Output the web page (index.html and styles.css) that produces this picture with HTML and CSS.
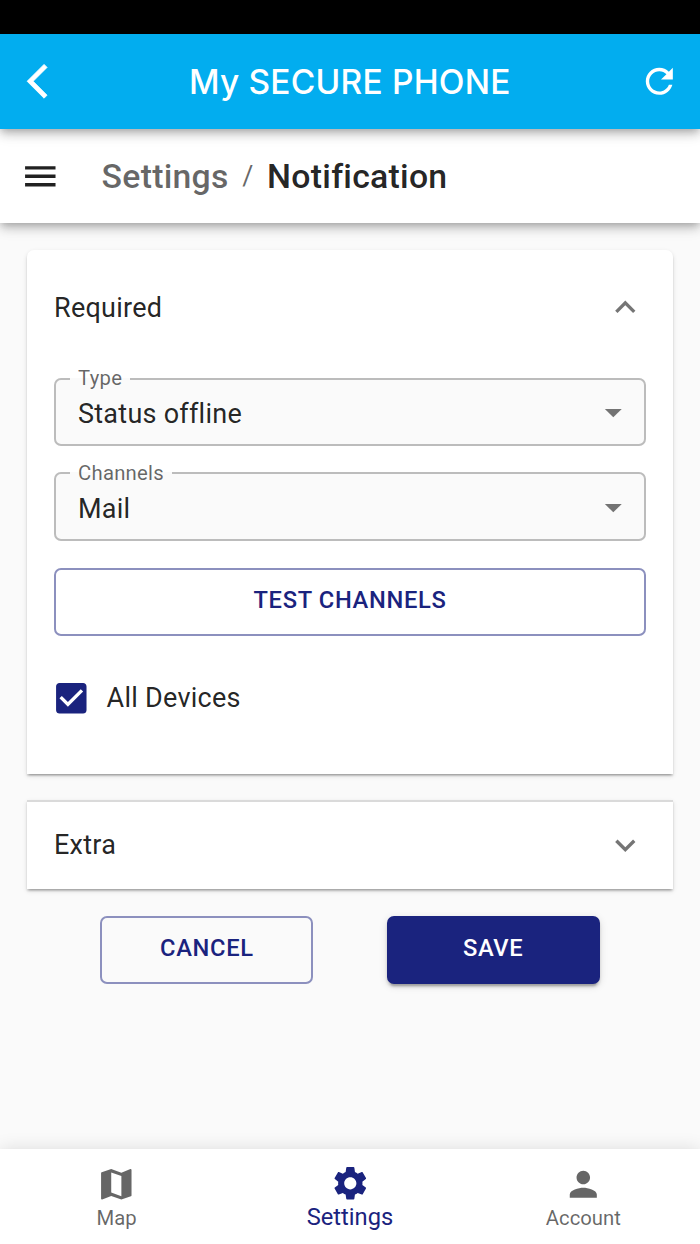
FILE: index.html
```
<!DOCTYPE html>
<html lang="en">
<head>
    <meta charset="UTF-8">
    <meta name="viewport" content="width=device-width, initial-scale=1.0">
    <title>Notification</title>
    <link rel="stylesheet" href="styles.css">
</head>
<body>
    <div class="status-bar"></div>
    <header class="app-bar">
        <svg class="icon back" viewBox="0 0 24 24"><path d="M17.77 3.77 16 2 6 12l10 10 1.77-1.77L9.54 12z"/></svg>
        <h1>My SECURE PHONE</h1>
        <svg class="icon" viewBox="0 0 24 24"><path d="M17.65 6.35C16.2 4.9 14.21 4 12 4c-4.42 0-7.99 3.58-7.99 8s3.57 8 7.99 8c3.73 0 6.84-2.55 7.73-6h-2.08c-.82 2.33-3.04 4-5.65 4-3.31 0-6-2.69-6-6s2.69-6 6-6c1.66 0 3.14.69 4.22 1.78L13 11h7V4l-2.35 2.35z"/></svg>
    </header>
    <div class="toolbar">
        <svg class="icon" viewBox="0 0 24 24"><path d="M3 18h18v-2H3v2zm0-5h18v-2H3v2zm0-7v2h18V6H3z"/></svg>
        <nav class="breadcrumbs">
            <span class="parent">Settings</span>
            <span class="separator">/</span>
            <span class="current">Notification</span>
        </nav>
    </div>

    <main class="container">
        <section class="card required">
            <div class="card-header">
                <span>Required</span>
                <svg class="icon" viewBox="0 0 24 24"><path d="M12 8l-6 6 1.41 1.41L12 10.83l4.59 4.58L18 14z"/></svg>
            </div>
            <div class="card-body">
                <fieldset class="select">
                    <legend>Type</legend>
                    <span>Status offline</span>
                    <svg class="icon" viewBox="0 0 24 24"><path d="M7 10l5 5 5-5z"/></svg>
                </fieldset>
                <fieldset class="select">
                    <legend>Channels</legend>
                    <span>Mail</span>
                    <svg class="icon" viewBox="0 0 24 24"><path d="M7 10l5 5 5-5z"/></svg>
                </fieldset>
                <button class="btn outlined">Test channels</button>
                <div class="checkbox">
                    <svg class="icon" viewBox="0 0 24 24"><path d="M19 3H5c-1.11 0-2 .9-2 2v14c0 1.1.89 2 2 2h14c1.11 0 2-.9 2-2V5c0-1.1-.89-2-2-2zm-9 14l-5-5 1.41-1.41L10 14.17l7.59-7.59L19 8l-9 9z"/></svg>
                    <span>All Devices</span>
                </div>
            </div>
        </section>

        <section class="card extra">
            <div class="card-header">
                <span>Extra</span>
                <svg class="icon" viewBox="0 0 24 24"><path d="M16.59 8.59L12 13.17 7.41 8.59 6 10l6 6 6-6z"/></svg>
            </div>
        </section>

        <div class="actions">
            <button class="btn outlined">Cancel</button>
            <button class="btn contained">Save</button>
        </div>
    </main>

    <nav class="bottom-nav">
        <div class="nav-item">
            <svg class="icon" viewBox="0 0 24 24"><path d="M20.5 3l-.16.03L15 5.1 9 3 3.36 4.9c-.21.07-.36.25-.36.48V20.5c0 .28.22.5.5.5l.16-.03L9 18.9l6 2.1 5.64-1.9c.21-.07.36-.25.36-.48V3.5c0-.28-.22-.5-.5-.5zM15 19l-6-2.11V5l6 2.11V19z"/></svg>
            <span>Map</span>
        </div>
        <div class="nav-item selected">
            <svg class="icon" viewBox="0 0 24 24"><path d="M19.14 12.94c.04-.3.06-.61.06-.94 0-.32-.02-.64-.07-.94l2.03-1.58c.18-.14.23-.41.12-.61l-1.92-3.32c-.12-.22-.37-.29-.59-.22l-2.39.96c-.5-.38-1.03-.7-1.62-.94l-.36-2.54c-.04-.24-.24-.41-.48-.41h-3.84c-.24 0-.43.17-.47.41l-.36 2.54c-.59.24-1.13.57-1.62.94l-2.39-.96c-.22-.08-.47 0-.59.22L2.74 8.87c-.12.21-.08.47.12.61l2.03 1.58c-.05.3-.09.63-.09.94s.02.64.07.94l-2.03 1.58c-.18.14-.23.41-.12.61l1.92 3.32c.12.22.37.29.59.22l2.39-.96c.5.38 1.03.7 1.62.94l.36 2.54c.05.24.24.41.48.41h3.84c.24 0 .44-.17.47-.41l.36-2.54c.59-.24 1.13-.56 1.62-.94l2.39.96c.22.08.47 0 .59-.22l1.92-3.32c.12-.22.07-.47-.12-.61l-2.01-1.58zM12 15.6c-1.98 0-3.6-1.62-3.6-3.6s1.62-3.6 3.6-3.6 3.6 1.62 3.6 3.6-1.62 3.6-3.6 3.6z"/></svg>
            <span>Settings</span>
        </div>
        <div class="nav-item">
            <svg class="icon" viewBox="0 0 24 24"><path d="M12 12c2.21 0 4-1.79 4-4s-1.79-4-4-4-4 1.79-4 4 1.79 4 4 4zm0 2c-2.67 0-8 1.34-8 4v2h16v-2c0-2.66-5.33-4-8-4z"/></svg>
            <span>Account</span>
        </div>
    </nav>
</body>
</html>
```
FILE: styles.css
```
* {
    box-sizing: border-box;
}

body {
    margin: 0;
    height: 1244px;
    display: flex;
    flex-direction: column;
    overflow: hidden;
    font-family: Roboto, "Liberation Sans", sans-serif;
    font-size: 27px;
    letter-spacing: 0.00938em;
    color: rgba(0, 0, 0, 0.87);
    background-color: #fafafa;
}

.icon {
    width: 40.6px;
    height: 40.6px;
    flex-shrink: 0;
    fill: currentColor;
}

.status-bar {
    height: 34px;
    background-color: #000;
}

.app-bar,
.toolbar {
    display: flex;
    align-items: center;
    box-shadow: 0 3px 7px -2px rgba(0, 0, 0, 0.2), 0 6px 9px rgba(0, 0, 0, 0.14), 0 2px 17px rgba(0, 0, 0, 0.12);
}

.app-bar {
    position: relative;
    z-index: 2;
    height: 94.5px;
    padding: 0 20.5px 0 17px;
    justify-content: space-between;
    color: #fff;
    background-color: #02adef;
}

.back {
    stroke: currentColor;
    stroke-width: 0.5;
    stroke-linejoin: round;
}

h1 {
    margin: 0 0 0 3px;
    padding-top: 1px;
    font-family: Inter, sans-serif;
    font-size: 33.5px;
    font-weight: 450;
    letter-spacing: 0.006em;
}

.toolbar {
    position: relative;
    z-index: 1;
    height: 94.5px;
    padding: 1px 20px 0;
    gap: 41px;
    background-color: #fff;
}

.breadcrumbs {
    display: flex;
    align-items: center;
    font-size: 33.8px;
    font-weight: 500;
    letter-spacing: 0.0075em;
}

.parent {
    color: rgba(0, 0, 0, 0.6);
}

.separator {
    margin: 0 13.5px;
    font-size: 27px;
    font-weight: 400;
    color: rgba(0, 0, 0, 0.6);
}

.container {
    flex: 1;
    padding: 27px;
}

.card {
    background-color: #fff;
    box-shadow: 0 3px 2px -2px rgba(0, 0, 0, 0.2), 0 2px 2px rgba(0, 0, 0, 0.14), 0 2px 5px rgba(0, 0, 0, 0.12);
}

.required {
    height: 524px;
    border-radius: 7px 7px 0 0;
}

.extra {
    margin-top: 26px;
    border-top: 2px solid #dadada;
}

.card-header {
    display: flex;
    align-items: center;
    justify-content: space-between;
    height: 87px;
    padding: 0 27px;
}

.card-header .icon {
    color: rgba(0, 0, 0, 0.54);
}

.extra .card-header {
    padding-bottom: 1px;
}

.required .card-header {
    height: 115px;
}

.card-body {
    display: flex;
    flex-direction: column;
    padding: 3px 27px 0;
}

.select {
    display: flex;
    align-items: flex-start;
    justify-content: space-between;
    height: 78px;
    margin: 0 0 16.5px;
    padding: 3px 10px 0 22px;
    border: 2px solid #bcbcbc;
    border-radius: 7px;
    background-color: #fafafa;
}

.select legend {
    height: 21px;
    margin-left: -8px;
    padding: 0 8px;
    font-size: 20.3px;
    line-height: 21px;
    color: rgba(0, 0, 0, 0.6);
}

.select span {
    line-height: 44px;
}

.select .icon {
    color: rgba(0, 0, 0, 0.54);
}

.btn {
    height: 68px;
    padding: 0 0 4px;
    border: none;
    border-radius: 7px;
    font-family: inherit;
    font-size: 23.7px;
    font-weight: 500;
    letter-spacing: 0.02857em;
    text-transform: uppercase;
}

.outlined {
    border: 2px solid #8c90be;
    color: #1a237e;
    background-color: transparent;
}

.contained {
    color: #fff;
    background-color: #1a237e;
    box-shadow: 0 5px 2px -3px rgba(0, 0, 0, 0.2), 0 3px 3px rgba(0, 0, 0, 0.14), 0 2px 8px rgba(0, 0, 0, 0.12);
}

.card-body .btn {
    margin-top: 11px;
}

.checkbox {
    display: flex;
    align-items: center;
    gap: 15px;
    margin: 42px 0 0 -3px;
}

.checkbox .icon {
    color: #1a237e;
}

.actions {
    display: flex;
    justify-content: space-evenly;
    margin-top: 27px;
}

.actions .btn {
    width: 213px;
}

.bottom-nav {
    display: flex;
    height: 95px;
    background-color: #fff;
    box-shadow: 0 3px 7px -2px rgba(0, 0, 0, 0.1), 0 0 17px rgba(0, 0, 0, 0.12);
}

.nav-item {
    flex: 1;
    display: flex;
    flex-direction: column;
    align-items: center;
    padding-top: 15px;
    font-size: 20.3px;
    letter-spacing: 0;
    line-height: 27px;
    color: rgba(0, 0, 0, 0.6);
}

.selected {
    padding-top: 14px;
    font-size: 23.7px;
    color: #1a237e;
}
```
